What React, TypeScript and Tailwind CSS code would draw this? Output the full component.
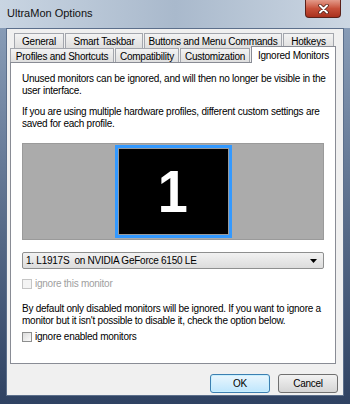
import { useState } from 'react';

const font = { fontFamily: '"Liberation Sans", Arial, sans-serif' };

function Tab({ label, w, active }: { label: string; w: number; active?: boolean }) {
  if (active) {
    return (
      <div
        className="flex items-center justify-center bg-white border border-b-0 border-[#898c95] h-[17px] -mt-[2px] relative z-10"
        style={{ width: w }}
      >
        {label}
      </div>
    );
  }
  return (
    <div
      className="flex items-center justify-center border border-b-0 border-[#a3a6ad] bg-gradient-to-b from-[#f3f3f3] to-[#dedede] h-[15px]"
      style={{ width: w }}
    >
      {label}
    </div>
  );
}

function Checkbox({ checked, disabled, onChange }: { checked: boolean; disabled?: boolean; onChange?: () => void }) {
  return (
    <div
      onClick={disabled ? undefined : onChange}
      className={
        'w-[10px] h-[10px] border flex items-center justify-center ' +
        (disabled ? 'border-[#c5c5c5] bg-[#f4f4f4]' : 'border-[#8e8f8f] bg-gradient-to-br from-[#dcdcdc] to-[#fbfbfb]')
      }
    >
      {checked && <span className="text-[9px] leading-none">✓</span>}
    </div>
  );
}

export default function App() {
  const [ignoreEnabled, setIgnoreEnabled] = useState(false);

  return (
    <div className="w-[350px] h-[404px] flex flex-col bg-gradient-to-b from-[#8fa3bd] to-[#2f4262] text-[10px] tracking-[-0.25px] text-black" style={font}>
      {/* title bar */}
      <div className="h-[28px] flex justify-between bg-gradient-to-r from-[#c9d5e2] via-[#a9b9cc] to-[#ccd7e3]">
        <div className="pl-[7px] pt-[5px] text-[11px] tracking-normal text-[#111]">UltraMon Options</div>
        <div className="mr-[9px] w-[36px] h-[18px] rounded-b-[4px] border border-t-0 border-[#5a2019] bg-gradient-to-b from-[#e39a8a] via-[#c7503a] to-[#a8301d] flex items-center justify-center">
          <svg width="11" height="10" viewBox="0 0 11 10">
            <path d="M2 1.5l7 7M9 1.5l-7 7" stroke="#4a1a12" strokeWidth="3.4" strokeLinecap="round" />
            <path d="M2 1.5l7 7M9 1.5l-7 7" stroke="#fff" strokeWidth="2" strokeLinecap="round" />
          </svg>
        </div>
      </div>

      {/* client area */}
      <div className="mx-[6px] h-[368px] bg-[#f0f0f0] border border-[#5c6f8b] flex flex-col">
        <div className="pt-[4px] pl-[3px] flex flex-col">
          <div className="flex pl-[4px] gap-[1px]">
            <Tab label="General" w={50} />
            <Tab label="Smart Taskbar" w={78} />
            <Tab label="Buttons and Menu Commands" w={138} />
            <Tab label="Hotkeys" w={51} />
          </div>
          <div className="flex gap-[1px]">
            <Tab label="Profiles and Shortcuts" w={104} />
            <Tab label="Compatibility" w={64} />
            <Tab label="Customization" w={70} />
            <Tab label="Ignored Monitors" w={85} active />
          </div>

          {/* panel */}
          <div className="w-[326px] h-[302px] bg-white border border-[#898c95] -mt-px pl-[11px] pr-[4px] pt-[10px] leading-[12px]">
            <p>Unused monitors can be ignored, and will then no longer be visible in the user interface.</p>
            <p className="mt-[9px] pr-[7px]">If you are using multiple hardware profiles, different custom settings are saved for each profile.</p>

            <div className="mt-[13px] mr-[7px] h-[97px] bg-[#ababab] border border-[#9a9a9a] flex justify-center items-center">
              <div className="w-[117px] h-[93px] bg-[#3399ff] p-[3px]">
                <div className="w-full h-full bg-black border border-[#9a9a9a] flex items-center justify-center">
                  <span className="text-white font-bold text-[60px] tracking-normal leading-none scale-x-90">1</span>
                </div>
              </div>
            </div>

            <div className="mt-[12px] mr-[7px] h-[17px] border border-[#8e8f8f] rounded-[2px] bg-gradient-to-b from-[#f2f2f2] to-[#dcdcdc] flex items-center justify-between pl-[3px] pr-[6px]">
              <span>1. L1917S&nbsp; on NVIDIA GeForce 6150 LE</span>
              <svg width="7" height="4" viewBox="0 0 7 4"><path d="M0 0h7L3.5 4z" fill="#000" /></svg>
            </div>

            <div className="mt-[9px] flex items-center gap-[3px] text-[#a0a0a0]">
              <Checkbox checked={false} disabled />
              <span>ignore this monitor</span>
            </div>

            <p className="mt-[13px]">By default only disabled monitors will be ignored. If you want to ignore a monitor but it isn't possible to disable it, check the option below.</p>

            <div className="mt-[4px] flex items-center gap-[3px]">
              <Checkbox checked={ignoreEnabled} onChange={() => setIgnoreEnabled(!ignoreEnabled)} />
              <span>ignore enabled monitors</span>
            </div>
          </div>
        </div>

        {/* buttons */}
        <div className="flex justify-end gap-[8px] pr-[5px] mt-[10px]">
          <button className="w-[60px] h-[19px] rounded-[3px] border border-[#3c7fb1] bg-gradient-to-b from-[#eaf6fd] to-[#bee6fd] shadow-[inset_0_0_0_1px_#c8f0ff]">OK</button>
          <button className="w-[60px] h-[19px] rounded-[3px] border border-[#707070] bg-gradient-to-b from-[#f2f2f2] to-[#d5d5d5]">Cancel</button>
        </div>
      </div>
    </div>
  );
}
